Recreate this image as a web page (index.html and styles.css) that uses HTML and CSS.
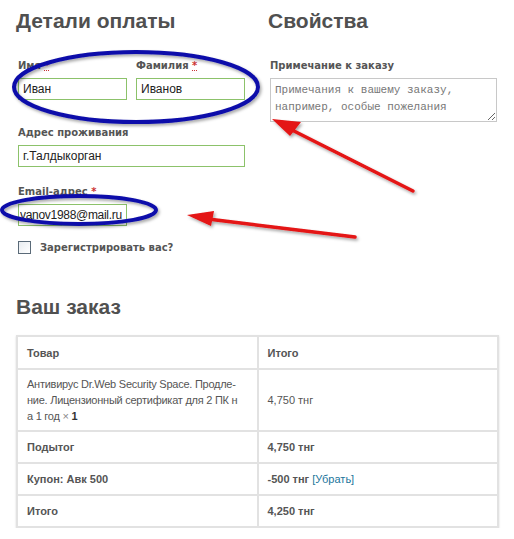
FILE: index.html
```html
<!DOCTYPE html>
<html lang="ru">
  <head>
    <meta charset="UTF-8" />
    <title>Оформление заказа</title>
    <link rel="stylesheet" href="styles.css">
  </head>
  <body>
    <div class="page">
      <!-- Billing + extra fields -->
      <div class="columns">
        <section class="col">
          <h3>Детали оплаты</h3>
          <div class="pair">
            <div class="field">
              <label>Имя <abbr>*</abbr></label>
              <input type="text" value="Иван" />
            </div>
            <div class="field">
              <label>Фамилия <abbr>*</abbr></label>
              <input type="text" value="Иванов" />
            </div>
          </div>
          <div class="field">
            <label>Адрес проживания</label>
            <input type="text" value="г.Талдыкорган" />
          </div>
          <div class="field half">
            <label>Email-адрес <abbr>*</abbr></label>
            <input type="text" class="tight" value="vanov1988@mail.ru" />
          </div>
          <div class="check">
            <span class="box"></span>
            <span>Зарегистрировать вас?</span>
          </div>
        </section>
        <section class="col">
          <h3>Свойства</h3>
          <div class="field">
            <label>Примечание к заказу</label>
            <textarea placeholder="Примечания к вашему заказу, например, особые пожелания"></textarea>
          </div>
        </section>
      </div>

      <!-- Order review -->
      <h3 class="order-title">Ваш заказ</h3>
      <table class="order">
        <thead>
          <tr>
            <th>Товар</th>
            <th>Итого</th>
          </tr>
        </thead>
        <tbody>
          <tr class="item">
            <td>
              <span class="line">Антивирус Dr.Web Security Space. Продле-</span>
              <span class="line">ние. Лицензионный сертификат для 2 ПК н</span>
              <span class="line">а 1 год <span class="qty">&times; <b>1</b></span></span>
            </td>
            <td>4,750 тнг</td>
          </tr>
        </tbody>
        <tfoot>
          <tr>
            <th>Подытог</th>
            <th>4,750 тнг</th>
          </tr>
          <tr>
            <th>Купон: Авк 500</th>
            <th>-500 тнг <a href="#">[Убрать]</a></th>
          </tr>
          <tr>
            <th>Итого</th>
            <th>4,250 тнг</th>
          </tr>
        </tfoot>
      </table>

      <!-- Hand-drawn annotations -->
      <svg class="marks" width="514" height="539" viewBox="0 0 514 539">
        <defs>
          <filter id="shade" x="-10%" y="-10%" width="130%" height="140%">
            <feDropShadow dx="1.5" dy="2" stdDeviation="1.5" flood-color="#000" flood-opacity="0.35" />
          </filter>
        </defs>
        <g filter="url(#shade)">
          <ellipse cx="136" cy="87" rx="122" ry="35" fill="none" stroke="#1111aa" stroke-width="4" />
          <ellipse cx="79" cy="210" rx="77" ry="14" fill="none" stroke="#1111aa" stroke-width="4" />
          <line x1="413" y1="191" x2="292" y2="130" stroke="#e41313" stroke-width="3.5" stroke-linecap="round" />
          <polygon points="272,119 301,122 290,136" fill="#e41313" />
          <line x1="355" y1="237" x2="208" y2="219" stroke="#e41313" stroke-width="3.5" stroke-linecap="round" />
          <polygon points="187,215 214,211 211,226" fill="#e41313" />
        </g>
      </svg>
    </div>
  </body>
</html>
```

FILE: styles.css
```css
body {
  margin: 0;
  background: #ffffff;
  font-family: "Liberation Sans", Arial, sans-serif;
  color: #555555;
}
.page {
  position: relative;
  width: 483px;
  padding: 0 15px 0 16px;
}
h3 {
  margin: 0;
  font-size: 21px;
  font-weight: bold;
  color: #505050;
}
.columns {
  display: flex;
  column-gap: 25px;
  padding: 9px 0 0 2px;
}
.col {
  width: 227px;
}
.col h3 {
  height: 51px;
  margin-left: -2px;
}
.pair {
  display: flex;
  column-gap: 9px;
  margin-bottom: 27px;
}
.pair .field {
  flex: 1;
  margin-bottom: 0;
}
.field {
  margin-bottom: 19px;
}
.field.half {
  width: 109px;
  margin-bottom: 15px;
}
.field label {
  display: block;
  height: 12px;
  margin: 0 0 6px;
  font-family: "DejaVu Sans", Verdana, sans-serif;
  font-size: 10px;
  font-weight: bold;
  color: #555555;
}
.field abbr {
  color: #cc3333;
  text-decoration: underline dotted;
}
.field input {
  display: block;
  box-sizing: border-box;
  width: 100%;
  height: 22px;
  padding: 0 4px;
  border: 1px solid #8cc26a;
  font-family: "Liberation Sans", Arial, sans-serif;
  font-size: 12px;
  color: #222222;
  outline: none;
}
.field input.tight {
  padding: 0 1px;
  letter-spacing: -0.3px;
}
.field textarea {
  display: block;
  box-sizing: border-box;
  width: 100%;
  height: 44px;
  padding: 3px 4px;
  border: 1px solid #c8c8c8;
  font-family: "Liberation Mono", "Courier New", monospace;
  font-size: 11px;
  line-height: 17px;
  resize: vertical;
}
.field textarea::placeholder {
  color: #777777;
}
.check {
  display: flex;
  align-items: center;
  column-gap: 9px;
  font-family: "DejaVu Sans", Verdana, sans-serif;
  font-size: 10px;
  font-weight: bold;
}
.check .box {
  width: 11px;
  height: 11px;
  border: 1px solid #5a6a78;
  background: linear-gradient(135deg, #e8ecf0, #ffffff);
}
.order-title {
  margin: 41px 0 16px;
}
.order {
  width: 100%;
  border-collapse: collapse;
  table-layout: fixed;
  box-shadow: 0 1px 2px rgba(0, 0, 0, 0.15);
  font-size: 11px;
  color: #555555;
}
.order th,
.order td {
  padding: 0 9px;
  border: 2px solid #e2e2e2;
  text-align: left;
  vertical-align: middle;
}
.order th {
  height: 30px;
  font-family: "Liberation Sans", Arial, sans-serif;
  font-size: 11px;
  font-weight: bold;
}
.order thead th {
  height: 31px;
}
.order .item td {
  height: 60px;
  line-height: 16px;
}
.order .line {
  display: block;
  white-space: nowrap;
  letter-spacing: -0.25px;
}
.order .qty {
  color: #888888;
}
.order .qty b {
  color: #333333;
}
.order a {
  font-weight: normal;
  color: #21759b;
  text-decoration: none;
}
.marks {
  position: absolute;
  top: 0;
  left: 0;
  pointer-events: none;
}
```
